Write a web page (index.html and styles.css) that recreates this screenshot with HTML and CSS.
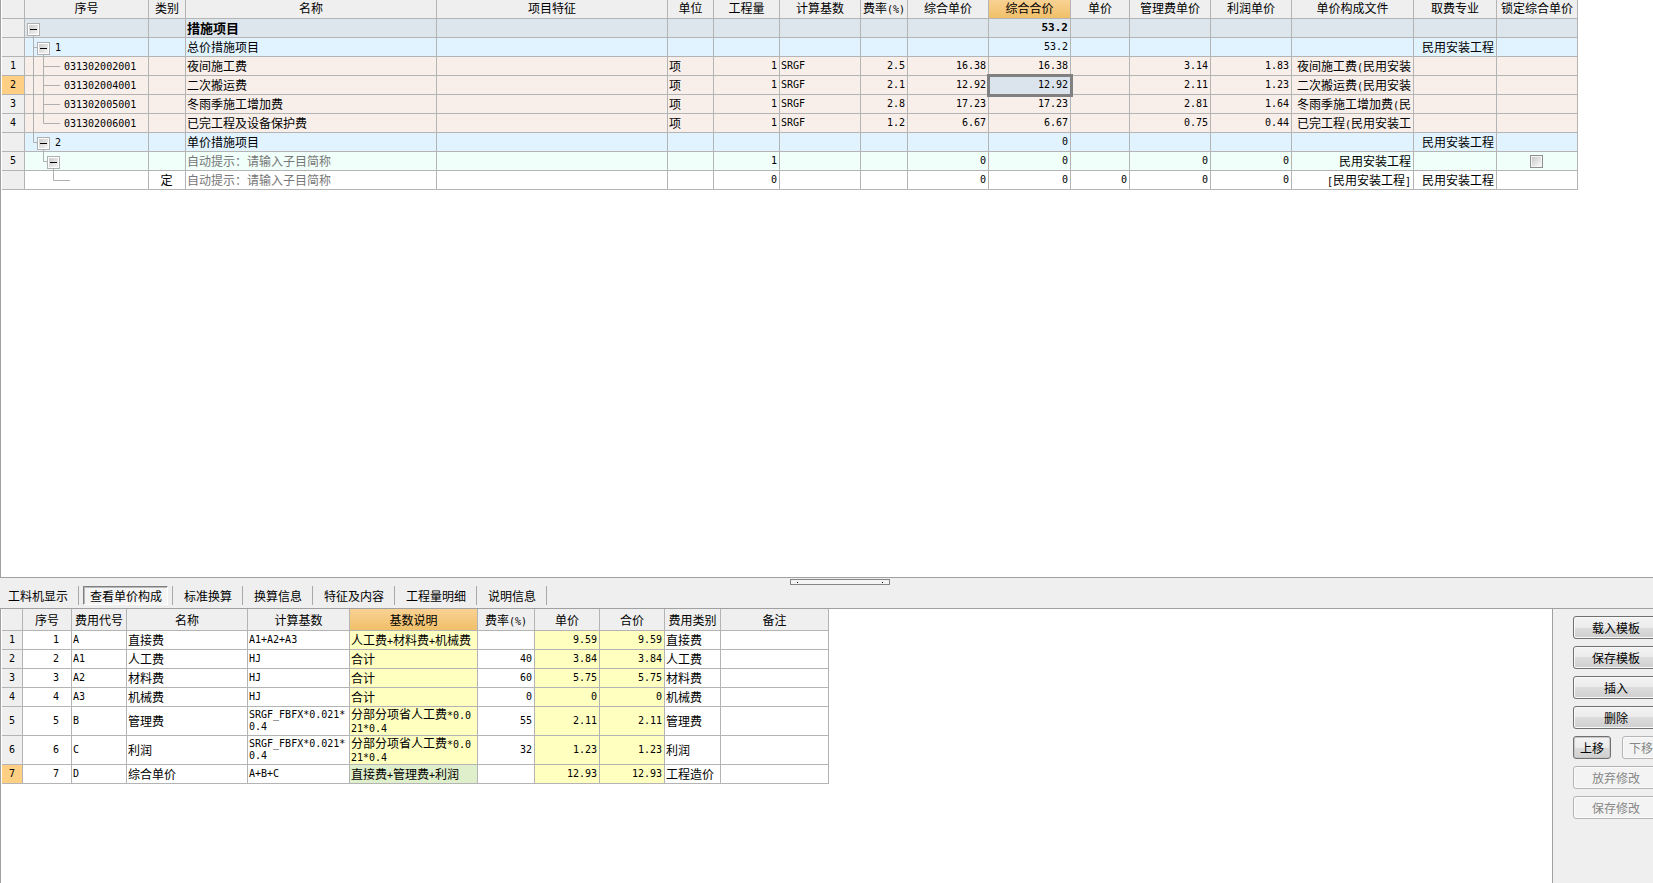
FILE: index.html
```html
<!DOCTYPE html>
<html lang="zh-CN">
<head>
<meta charset="utf-8">
<title>措施项目</title>
<link rel="stylesheet" href="styles.css">
</head>
<body>
<main class="app">
  <section class="pane" aria-label="措施项目">
    <table class="grid items">
      <colgroup>
        <col class="w-index"><col class="w-code"><col class="w-kind"><col class="w-name"><col class="w-feature"><col class="w-unit"><col class="w-qty"><col class="w-price"><col class="w-rate"><col class="w-price"><col class="w-total"><col class="w-unitprice"><col class="w-price"><col class="w-price"><col class="w-file"><col class="w-major"><col class="w-price">
      </colgroup>
      <thead>
        <tr><th></th><th>序号</th><th>类别</th><th>名称</th><th>项目特征</th><th>单位</th><th>工程量</th><th>计算基数</th><th>费率<span class="m">(%)</span></th><th>综合单价</th><th class="current">综合合价</th><th>单价</th><th>管理费单价</th><th>利润单价</th><th>单价构成文件</th><th>取费专业</th><th>锁定综合单价</th></tr>
      </thead>
      <tbody>
        <tr class="root">
          <th></th>
          <td class="tree"><svg class="guide" viewBox="0 0 120 19"><path d="M8.500 15V19"/></svg><div class="node"><button class="toggle level0" aria-label="折叠"></button></div></td>
          <td></td><td>措施项目</td><td></td><td></td><td></td><td></td><td></td><td></td><td class="m r">53.2</td><td></td><td></td><td></td><td></td><td></td><td></td>
        </tr>
        <tr class="group">
          <th></th>
          <td class="tree"><svg class="guide" viewBox="0 0 120 19"><path d="M8.500 0V19M8 9.500H13M18.500 15V19"/></svg><div class="node"><button class="toggle level1" aria-label="折叠"></button><span class="m">1</span></div></td>
          <td></td><td>总价措施项目</td><td></td><td></td><td></td><td></td><td></td><td></td><td class="m r">53.2</td><td></td><td></td><td></td><td></td><td class="r">民用安装工程</td><td></td>
        </tr>
        <tr class="item">
          <th class="m">1</th>
          <td class="tree"><svg class="guide" viewBox="0 0 120 19"><path d="M8.500 0V19M18.500 0V19M18 9.500H35"/></svg><div class="node"><span class="m leaf">031302002001</span></div></td>
          <td></td><td>夜间施工费</td><td></td><td>项</td><td class="m r">1</td><td class="m">SRGF</td><td class="m r">2.5</td><td class="m r">16.38</td><td class="m r">16.38</td><td></td><td class="m r">3.14</td><td class="m r">1.83</td><td class="r">夜间施工费<span class="m">(</span>民用安装</td><td></td><td></td>
        </tr>
        <tr class="item">
          <th class="m current">2</th>
          <td class="tree"><svg class="guide" viewBox="0 0 120 19"><path d="M8.500 0V19M18.500 0V19M18 9.500H35"/></svg><div class="node"><span class="m leaf">031302004001</span></div></td>
          <td></td><td>二次搬运费</td><td></td><td>项</td><td class="m r">1</td><td class="m">SRGF</td><td class="m r">2.1</td><td class="m r">12.92</td><td class="m r selected">12.92</td><td></td><td class="m r">2.11</td><td class="m r">1.23</td><td class="r">二次搬运费<span class="m">(</span>民用安装</td><td></td><td></td>
        </tr>
        <tr class="item">
          <th class="m">3</th>
          <td class="tree"><svg class="guide" viewBox="0 0 120 19"><path d="M8.500 0V19M18.500 0V19M18 9.500H35"/></svg><div class="node"><span class="m leaf">031302005001</span></div></td>
          <td></td><td>冬雨季施工增加费</td><td></td><td>项</td><td class="m r">1</td><td class="m">SRGF</td><td class="m r">2.8</td><td class="m r">17.23</td><td class="m r">17.23</td><td></td><td class="m r">2.81</td><td class="m r">1.64</td><td class="r">冬雨季施工增加费<span class="m">(</span>民</td><td></td><td></td>
        </tr>
        <tr class="item">
          <th class="m">4</th>
          <td class="tree"><svg class="guide" viewBox="0 0 120 19"><path d="M8.500 0V19M18.500 0V9.500H35"/></svg><div class="node"><span class="m leaf">031302006001</span></div></td>
          <td></td><td>已完工程及设备保护费</td><td></td><td>项</td><td class="m r">1</td><td class="m">SRGF</td><td class="m r">1.2</td><td class="m r">6.67</td><td class="m r">6.67</td><td></td><td class="m r">0.75</td><td class="m r">0.44</td><td class="r">已完工程<span class="m">(</span>民用安装工</td><td></td><td></td>
        </tr>
        <tr class="group">
          <th></th>
          <td class="tree"><svg class="guide" viewBox="0 0 120 19"><path d="M8.500 0V9.500H13M18.500 15V19"/></svg><div class="node"><button class="toggle level1" aria-label="折叠"></button><span class="m">2</span></div></td>
          <td></td><td>单价措施项目</td><td></td><td></td><td></td><td></td><td></td><td></td><td class="m r">0</td><td></td><td></td><td></td><td></td><td class="r">民用安装工程</td><td></td>
        </tr>
        <tr class="entry">
          <th class="m">5</th>
          <td class="tree"><svg class="guide" viewBox="0 0 120 19"><path d="M18.500 0V9.500H23M28.500 15V19"/></svg><div class="node"><button class="toggle level2" aria-label="折叠"></button></div></td>
          <td></td><td class="hint">自动提示：请输入子目简称</td><td></td><td></td><td class="m r">1</td><td></td><td></td><td class="m r">0</td><td class="m r">0</td><td></td><td class="m r">0</td><td class="m r">0</td><td class="r">民用安装工程</td><td></td><td class="c"><input class="lock" type="checkbox" aria-label="锁定综合单价"></td>
        </tr>
        <tr>
          <th></th>
          <td class="tree"><svg class="guide" viewBox="0 0 120 19"><path d="M28.500 0V9.500H45"/></svg></td>
          <td class="c">定</td><td class="hint">自动提示：请输入子目简称</td><td></td><td></td><td class="m r">0</td><td></td><td></td><td class="m r">0</td><td class="m r">0</td><td class="m r">0</td><td class="m r">0</td><td class="m r">0</td><td class="r"><span class="m">[</span>民用安装工程<span class="m">]</span></td><td class="r">民用安装工程</td><td></td>
        </tr>
      </tbody>
    </table>
  </section>

  <nav class="tabs" aria-label="明细">
    <div class="grip" role="separator"></div>
    <ul class="tablist">
      <li><button class="tab">工料机显示</button></li>
      <li><button class="tab active">查看单价构成</button></li>
      <li><button class="tab">标准换算</button></li>
      <li><button class="tab">换算信息</button></li>
      <li><button class="tab">特征及内容</button></li>
      <li><button class="tab">工程量明细</button></li>
      <li><button class="tab">说明信息</button></li>
    </ul>
  </nav>

  <section class="detail">
    <div class="sheet">
      <table class="grid costs">
        <colgroup>
          <col class="c-index"><col class="c-no"><col class="c-code"><col class="c-name"><col class="c-base"><col class="c-desc"><col class="c-rate"><col class="c-price"><col class="c-price"><col class="c-type"><col class="c-note">
        </colgroup>
        <thead>
          <tr><th></th><th>序号</th><th>费用代号</th><th>名称</th><th>计算基数</th><th class="current">基数说明</th><th>费率<span class="m">(%)</span></th><th>单价</th><th>合价</th><th>费用类别</th><th>备注</th></tr>
        </thead>
        <tbody>
          <tr><th class="m">1</th><td class="m no">1</td><td class="m">A</td><td>直接费</td><td class="m">A1+A2+A3</td><td class="y">人工费<span class="m">+</span>材料费<span class="m">+</span>机械费</td><td></td><td class="m r y">9.59</td><td class="m r y">9.59</td><td>直接费</td><td></td></tr>
          <tr><th class="m">2</th><td class="m no">2</td><td class="m">A1</td><td>人工费</td><td class="m">HJ</td><td class="y">合计</td><td class="m r">40</td><td class="m r y">3.84</td><td class="m r y">3.84</td><td>人工费</td><td></td></tr>
          <tr><th class="m">3</th><td class="m no">3</td><td class="m">A2</td><td>材料费</td><td class="m">HJ</td><td class="y">合计</td><td class="m r">60</td><td class="m r y">5.75</td><td class="m r y">5.75</td><td>材料费</td><td></td></tr>
          <tr><th class="m">4</th><td class="m no">4</td><td class="m">A3</td><td>机械费</td><td class="m">HJ</td><td class="y">合计</td><td class="m r">0</td><td class="m r y">0</td><td class="m r y">0</td><td>机械费</td><td></td></tr>
          <tr class="tall"><th class="m">5</th><td class="m no">5</td><td class="m">B</td><td>管理费</td><td class="m wrap">SRGF_FBFX*0.021*<br>0.4</td><td class="y wrap">分部分项省人工费<span class="m">*0.0<br>21*0.4</span></td><td class="m r">55</td><td class="m r y">2.11</td><td class="m r y">2.11</td><td>管理费</td><td></td></tr>
          <tr class="tall"><th class="m">6</th><td class="m no">6</td><td class="m">C</td><td>利润</td><td class="m wrap">SRGF_FBFX*0.021*<br>0.4</td><td class="y wrap">分部分项省人工费<span class="m">*0.0<br>21*0.4</span></td><td class="m r">32</td><td class="m r y">1.23</td><td class="m r y">1.23</td><td>利润</td><td></td></tr>
          <tr><th class="m current">7</th><td class="m no">7</td><td class="m">D</td><td>综合单价</td><td class="m">A+B+C</td><td class="focus">直接费<span class="m">+</span>管理费<span class="m">+</span>利润</td><td></td><td class="m r y">12.93</td><td class="m r y">12.93</td><td>工程造价</td><td></td></tr>
        </tbody>
      </table>
    </div>
    <aside class="actions">
      <button class="btn">载入模板</button>
      <button class="btn">保存模板</button>
      <button class="btn">插入</button>
      <button class="btn">删除</button>
      <div class="pair">
        <button class="btn focused">上移</button>
        <button class="btn" disabled>下移</button>
      </div>
      <button class="btn" disabled>放弃修改</button>
      <button class="btn" disabled>保存修改</button>
    </aside>
  </section>
</main>
</body>
</html>
```
FILE: styles.css
```css
* { box-sizing: border-box; }

body {
  margin: 0;
  background: #efefef;
  color: #000;
  font: 12px/16px "Noto Sans CJK SC", sans-serif;
}

button, input { font: inherit; color: inherit; margin: 0; }

.app {
  display: grid;
  grid-template-rows: minmax(0, 578fr) auto minmax(0, 274fr);
  height: 100vh;
  overflow: hidden;
}

.pane {
  overflow: hidden;
  background: #fff;
  border-left: 1px solid #a0a0a0;
  border-bottom: 1px solid #a0a0a0;
  padding-left: 1px;
}

/* Latin letters and digits take half the width of a Chinese character */
.m { font-family: "DejaVu Sans Mono", "Noto Sans CJK SC", monospace; font-size: 10px; }
span.m { line-height: 10px; }

/* ---- data grids ---- */
.grid {
  table-layout: fixed;
  width: 1px;
  border-spacing: 0;
}

.grid th, .grid td {
  height: 19px;
  padding: 0 2px 0 1px;
  border-right: 1px solid #b4b4b4;
  border-bottom: 1px solid #b4b4b4;
  text-align: left;
  white-space: nowrap;
  overflow: hidden;
}

.grid th {
  background: #efefef;
  font-weight: normal;
  text-align: center;
  padding: 0;
}

.grid td.r { text-align: right; }
.grid td.c { text-align: center; }

.grid thead .current { background: linear-gradient(#f9d193, #f0c069); }
.grid tbody .current { background: #ffd083; }

.w-index { width: 23px; }
.w-code { width: 124px; }
.w-kind { width: 37px; }
.w-name { width: 251px; }
.w-feature { width: 231px; }
.w-unit { width: 46px; }
.w-qty { width: 66px; }
.w-price { width: 81px; }
.w-rate { width: 47px; }
.w-total { width: 82px; }
.w-unitprice { width: 59px; }
.w-file { width: 122px; }
.w-major { width: 83px; }

.items thead th { padding-bottom: 2px; }
.root td { background: #dde5ed; font-weight: bold; font-size: 13px; }
.root td.m { font-size: 11px; }
.group td { background: #e1f3ff; }
.item td { background: #f9efea; }
.entry td { background: #f0fff9; }
.hint { color: #777; }

.items .selected {
  position: relative;
  overflow: visible;
  background: #dbe4ed;
  outline: 3px solid #808080;
  outline-offset: -1px;
}

/* ---- tree column ---- */
.grid .tree { position: relative; padding: 0; overflow: visible; }

.guide {
  position: absolute;
  left: 0;
  top: 0;
  width: 120px;
  height: 19px;
  fill: none;
  stroke: #b0b0b0;
}

.node {
  position: relative;
  display: flex;
  align-items: center;
  padding-top: 2px;
}

.toggle {
  flex: none;
  width: 13px;
  height: 13px;
  padding: 0;
  border: 1px solid #b0b0b0;
  background:
    linear-gradient(#000, #000) center / 7px 1px no-repeat,
    linear-gradient(135deg, #ccc, #f4f4f4) center / 9px 9px no-repeat,
    #fff;
}

.level0 { margin-left: 2px; }
.level1 { margin-left: 12px; margin-right: 5px; }
.level2 { margin-left: 22px; }
.leaf { margin-left: 39px; }

.lock {
  appearance: none;
  display: block;
  margin: 0 auto;
  width: 13px;
  height: 13px;
  border: 1px solid #8f8f8f;
  background: linear-gradient(135deg, #c8c8c8, #fafafa) center / 9px 9px no-repeat, #f4f4f4;
}

/* ---- tab strip ---- */
.tabs {
  position: relative;
  border-bottom: 1px solid #a0a0a0;
  padding: 8px 0 3px 1px;
}

.grip {
  position: absolute;
  top: 1px;
  left: 47.8%;
  width: 100px;
  height: 6px;
  border: 1px solid #858585;
  background:
    linear-gradient(#000, #000) 6px 2px / 1px 1px no-repeat,
    linear-gradient(#000, #000) 91px 2px / 1px 1px no-repeat,
    #f4f4f4;
}

.tablist {
  display: flex;
  margin: 0;
  padding: 0;
  list-style: none;
}

.tablist li { padding: 0 4px; border-right: 1px solid #a8a8a8; height: 19px; }
.tablist li:first-child { padding-left: 0; }

.tab {
  display: block;
  height: 19px;
  padding: 0 5px 0 6px;
  border: 1px solid transparent;
  background: none;
  line-height: 17px;
  white-space: nowrap;
}

.tab.active {
  border-color: #808080 #fff #fff #808080;
  background: #f4f4f4;
  box-shadow: inset 1px 1px #b8b8b8;
}

/* ---- cost breakdown ---- */
.detail { display: flex; min-height: 0; }

.sheet {
  flex: 1;
  min-width: 0;
  overflow: hidden;
  background: #fff;
  border-left: 1px solid #a0a0a0;
  border-right: 1px solid #a0a0a0;
  padding-left: 1px;
}

.c-index { width: 21px; }
.c-no { width: 49px; }
.c-code { width: 55px; }
.c-name { width: 121px; }
.c-base { width: 102px; }
.c-desc { width: 128px; }
.c-rate { width: 57px; }
.c-price { width: 65px; }
.c-type { width: 56px; }
.c-note { width: 108px; }

.costs thead th { height: 22px; }
.costs .tall td, .costs .tall th { height: 29px; }
.costs td.no { text-align: right; padding-right: 12px; }
.costs td.wrap { line-height: 12px; padding-bottom: 1px; overflow: visible; }
.costs .y { background: #ffffc0; }
.costs .focus { background: #e0efcb; }

/* ---- side buttons ---- */
.actions {
  display: flex;
  flex-direction: column;
  gap: 7px;
  flex: 0 0 100px;
  padding: 7px 0 0 20px;
  overflow: hidden;
}

.btn {
  flex: none;
  width: 86px;
  height: 23px;
  padding: 0;
  border: 1px solid #707070;
  border-radius: 3px;
  background: linear-gradient(#f3f3f3, #ebebeb 50%, #dcdcdc 50%, #cfcfcf);
  box-shadow: inset 0 0 0 1px #fafafa;
  line-height: 20px;
  white-space: nowrap;
}

.btn:disabled {
  border-color: #b5b5b5;
  background: #f3f3f3;
  color: #878787;
}

.pair { display: flex; gap: 11px; }
.pair .btn { width: 38px; }
.btn.focused { box-shadow: inset 0 0 0 1px #c8c8c8; }
```
